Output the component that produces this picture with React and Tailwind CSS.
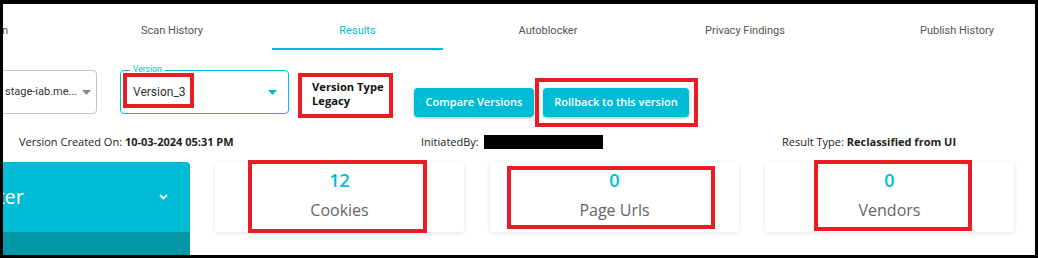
import React from 'react';

const tabs = [
  { label: 'Scan Configuration', w: 'w-[269px] items-end pr-[64px]' },
  { label: 'Scan History', w: 'w-[200px] items-center' },
  { label: 'Results', w: 'w-[171px] items-center', current: true },
  { label: 'Autoblocker', w: 'w-[210px] items-center' },
  { label: 'Privacy Findings', w: 'w-[184px] items-center' },
  { label: 'Publish History', w: 'w-[240px] items-center' },
];

const stats = [
  { value: '12', label: 'Cookies' },
  { value: '0', label: 'Page Urls' },
  { value: '0', label: 'Vendors' },
];

// red annotation boxes drawn over the screenshot
const marks = [
  'left-[120px] top-[69px] w-[71px] h-[35px]',
  'left-[295px] top-[69px] w-[95px] h-[45px]',
  'left-[532px] top-[74px] w-[163px] h-[49px]',
  'left-[245px] top-[156px] w-[179px] h-[73px]',
  'left-[504px] top-[162px] w-[208px] h-[63px]',
  'left-[811px] top-[156px] w-[158px] h-[71px]',
];

const Triangle = ({ color }) => (
  <svg width="9" height="5" viewBox="0 0 9 5" className="shrink-0">
    <path d="M0 0 L9 0 L4.5 5 Z" fill={color} />
  </svg>
);

export default function App() {
  return (
    <div className="w-[1038px] h-[258px] bg-black pt-[4px] pl-[3px] pr-[3px] pb-[3px]">
      <div className="relative w-full h-full bg-white overflow-hidden font-['Open_Sans',sans-serif]">
        {/* tabs */}
        <div className="flex h-[46px] ml-[-200px] font-['Roboto',sans-serif] text-[11px]">
          {tabs.map((t) => (
            <div
              key={t.label}
              className={`${t.w} shrink-0 flex flex-col justify-between pt-[20px] ${t.current ? 'text-[#00bcd4]' : 'text-[#555]'}`}
            >
              <span className="leading-[14px] whitespace-nowrap">{t.label}</span>
              <div className={`w-full h-[2px] ${t.current ? 'bg-[#00bcd4]' : 'bg-transparent'}`} />
            </div>
          ))}
        </div>

        {/* version controls */}
        <div className="flex items-start mt-[20px] h-[61px]">
          <div className="shrink-0 ml-[-26px] w-[120px] h-[44px] border border-[#c4c4c4] rounded-[4px] flex items-center gap-[5px] pl-[27px] font-['Roboto',sans-serif] text-[11px] text-[#333]">
            <span className="whitespace-nowrap">stage-iab.me...</span>
            <Triangle color="#888" />
          </div>
          <div className="relative shrink-0 ml-[23px] w-[169px] h-[44px] border border-[#00bcd4] rounded-[4px] flex items-center justify-between pl-[12px] pr-[11px] font-['Roboto',sans-serif] text-[12px] text-[#333]">
            <span className="absolute left-[9px] top-[-7px] bg-white px-[3px] text-[8.5px] leading-[11px] text-[#00bcd4]">Version</span>
            <span className="mt-[-1px]">Version_3</span>
            <Triangle color="#00bcd4" />
          </div>
          <div className="shrink-0 w-[85px] ml-[23px] mt-[10px] text-[11.2px] leading-[14px] font-bold text-[#111] whitespace-nowrap">
            <div>Version Type</div>
            <div>Legacy</div>
          </div>
          <button className="shrink-0 ml-[17px] mt-[18px] h-[29px] w-[120px] rounded-[4px] bg-[#00bcd4] text-white text-[11px] font-semibold whitespace-nowrap shadow-[0_1px_3px_rgba(0,0,0,0.3)]">
            Compare Versions
          </button>
          <button className="shrink-0 ml-[9px] mt-[18px] h-[29px] w-[146px] rounded-[4px] bg-[#00bcd4] text-white text-[11px] font-semibold whitespace-nowrap shadow-[0_1px_3px_rgba(0,0,0,0.3)]">
            Rollback to this version
          </button>
        </div>

        {/* meta info */}
        <div className="flex items-center h-[16px] mt-[3px] pl-[16px] text-[11px] text-[#222]">
          <div className="w-[402px] shrink-0">
            Version Created On: <span className="font-bold">10-03-2024 05:31 PM</span>
          </div>
          <div className="w-[361px] shrink-0 flex items-center">
            <span>InitiatedBy:</span>
            <span className="ml-[5px] w-[119px] h-[14px] bg-black" />
          </div>
          <div className="shrink-0">
            Result Type: <span className="font-bold">Reclassified from UI</span>
          </div>
        </div>

        {/* stats */}
        <div className="flex items-start mt-[12px]">
          <div className="shrink-0 w-[187px] flex flex-col">
            <div className="h-[70px] bg-[#00bcd4] rounded-tr-[4px] flex items-center justify-between pr-[22px] text-white">
              <span className="ml-[-26px] text-[20px]">Filter</span>
              <svg width="9" height="6" viewBox="0 0 9 6">
                <path d="M1 1 L4.5 4.5 L8 1" fill="none" stroke="white" strokeWidth="1.8" />
              </svg>
            </div>
            <div className="h-[23px] bg-[#0097a7]" />
          </div>
          <div className="flex gap-[26px] ml-[25px]">
            {stats.map((s) => (
              <div
                key={s.label}
                className="w-[249px] h-[70px] bg-white rounded-[3px] shadow-[0_1px_4px_rgba(0,0,0,0.13)] flex flex-col items-center pt-[6px]"
              >
                <span className="text-[18px] leading-[24px] font-semibold text-[#00bcd4]">{s.value}</span>
                <span className="mt-[7px] text-[16px] leading-[22px] text-[#666]">{s.label}</span>
              </div>
            ))}
          </div>
        </div>

        {marks.map((m) => (
          <div key={m} className={`absolute ${m} border-[4px] border-[#ed1c24] pointer-events-none`} />
        ))}
      </div>
    </div>
  );
}
